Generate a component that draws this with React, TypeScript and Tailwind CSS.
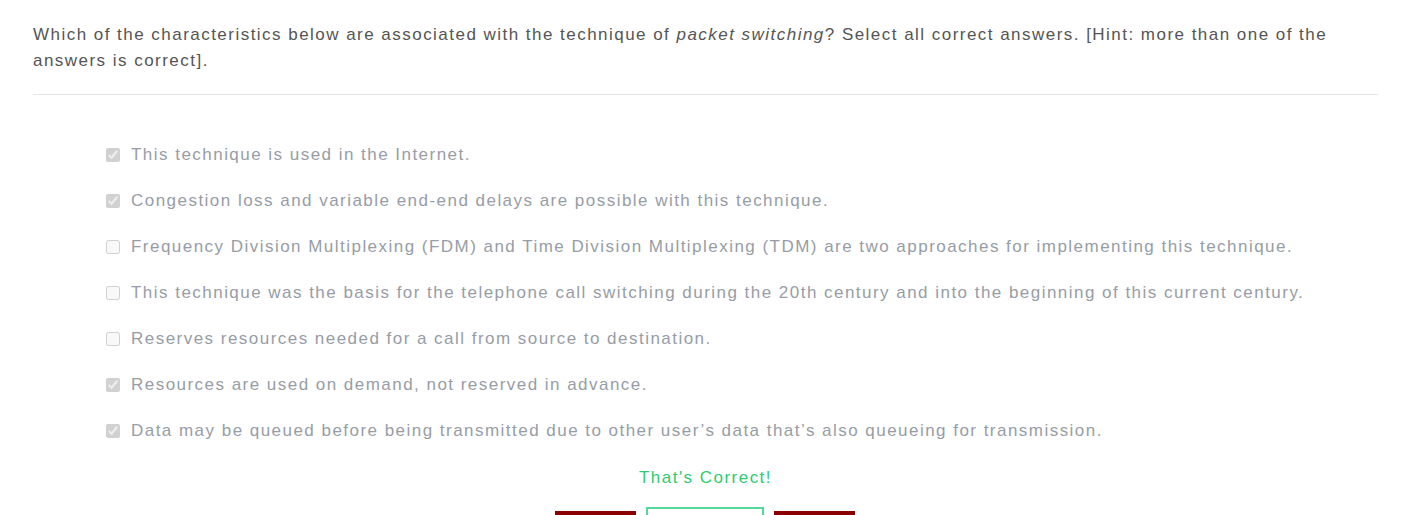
import type { ReactNode } from 'react';

const options: { text: string; checked: boolean }[] = [
  { text: 'This technique is used in the Internet.', checked: true },
  { text: 'Congestion loss and variable end-end delays are possible with this technique.', checked: true },
  {
    text: 'Frequency Division Multiplexing (FDM) and Time Division Multiplexing (TDM) are two approaches for implementing this technique.',
    checked: false,
  },
  {
    text: 'This technique was the basis for the telephone call switching during the 20th century and into the beginning of this current century.',
    checked: false,
  },
  { text: 'Reserves resources needed for a call from source to destination.', checked: false },
  { text: 'Resources are used on demand, not reserved in advance.', checked: true },
  {
    text: 'Data may be queued before being transmitted due to other user\u2019s data that\u2019s also queueing for transmission.',
    checked: true,
  },
];

export default function App() {
  return (
    <div className="h-[515px] overflow-hidden bg-white pl-[33px] pr-[43px] pt-[22px] font-['Liberation_Sans',Arial,sans-serif] tracking-[1.47px]">
      <p className="text-[17px] leading-[26px] text-[#555]">
        Which of the characteristics below are associated with the technique of <i>packet switching</i>? Select all
        correct answers. [Hint: more than one of the answers is correct].
      </p>
      <div className="mt-[20px] h-px bg-[#e5e5e5]" />

      <div className="mt-[37px] flex flex-col pl-[69px]">
        {options.map((o) => (
          <Option key={o.text} checked={o.checked}>
            {o.text}
          </Option>
        ))}
      </div>

      <div className="mt-[13px] text-center text-[17px] leading-[22px] text-[#2ecc71]">That&apos;s Correct!</div>

      <div className="mt-[18px] flex justify-center gap-[10px] pr-[1px]">
        <button className="mt-[4px] h-[32px] w-[81px] bg-[#8b0000]" />
        <button className="h-[36px] w-[118px] border-2 border-[#52d99a] bg-white" />
        <button className="mt-[4px] h-[32px] w-[81px] bg-[#8b0000]" />
      </div>
    </div>
  );
}

function Option({ checked, children }: { checked: boolean; children: ReactNode }) {
  return (
    <label className="flex h-[46px] items-center text-[17px] text-[#979da6]">
      <input type="checkbox" disabled defaultChecked={checked} className="m-[3px_3px_3px_4px] h-[14px] w-[14px]" />
      <span className="ml-[8px]">{children}</span>
    </label>
  );
}
